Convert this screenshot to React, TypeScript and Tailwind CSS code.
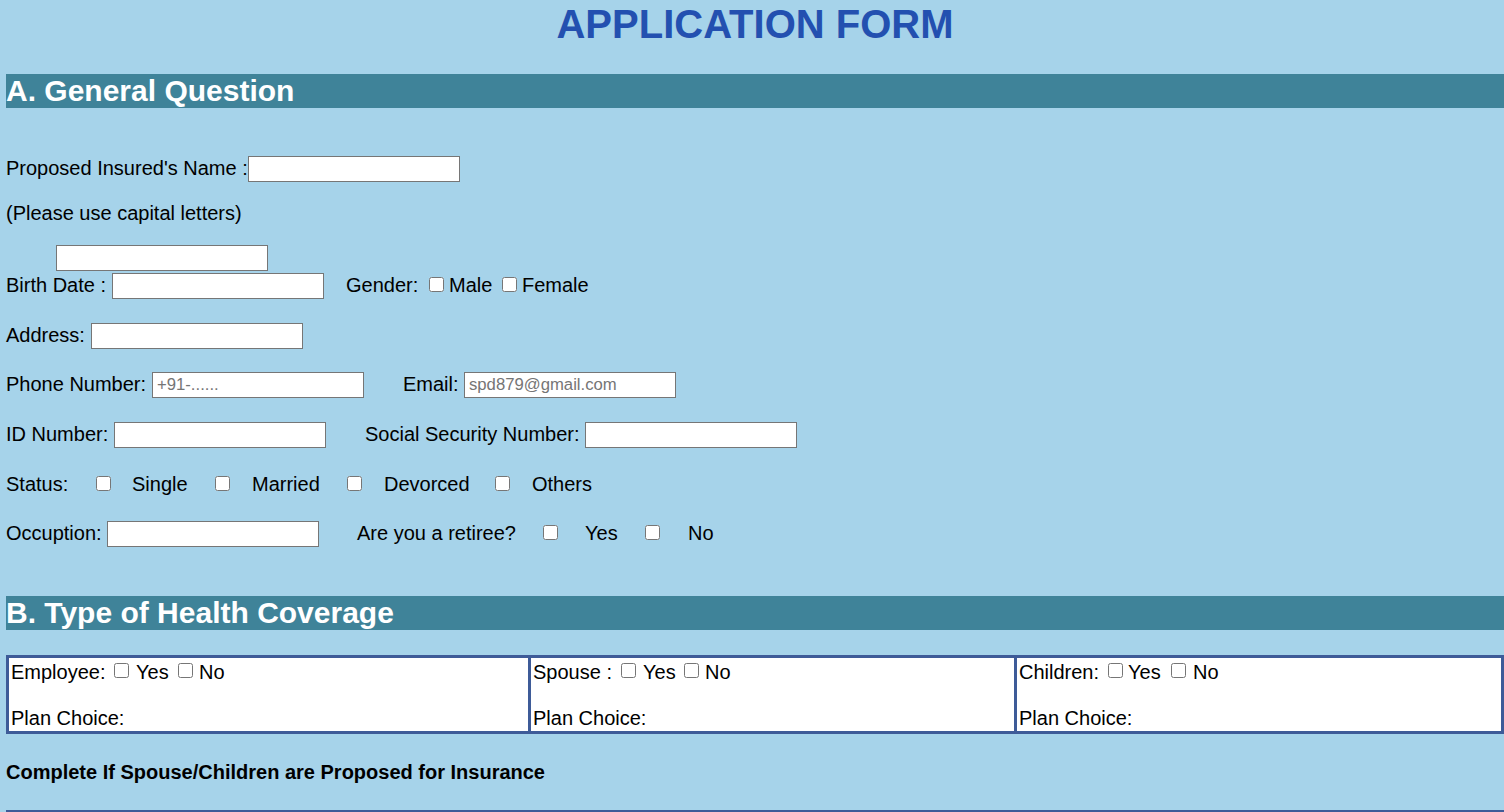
import React from 'react';

function Field({ placeholder, className = '' }: { placeholder?: string; className?: string }) {
  return (
    <input
      type="text"
      placeholder={placeholder}
      className={`w-[212px] h-[26px] shrink-0 border border-[#767676] bg-white px-[4px] text-[16.7px] text-black placeholder:text-[#757575] ${className}`}
    />
  );
}

function Box({ className = '' }: { className?: string }) {
  return <input type="checkbox" className={`w-[15px] h-[15px] -mx-[1px] shrink-0 mb-[4px] ${className}`} />;
}

function Label({ children, className = '' }: { children: React.ReactNode; className?: string }) {
  return <span className={`shrink-0 whitespace-nowrap mb-[3px] ${className}`}>{children}</span>;
}

function SectionBar({ title, className = '' }: { title: string; className?: string }) {
  return (
    <h2 className={`h-[34px] leading-[34px] bg-[#3f8399] text-white font-bold text-[30px] ${className}`}>
      {title}
    </h2>
  );
}

function CoverCell({
  label,
  labelW,
  yesGap,
  yesW,
  noGap,
  className = '',
}: {
  label: string;
  labelW: string;
  yesGap: string;
  yesW: string;
  noGap: string;
  className?: string;
}) {
  return (
    <div className={`px-[2px] pt-[2px] pb-[1px] ${className}`}>
      <div className="flex items-center h-[23px]">
        <span className={`shrink-0 whitespace-nowrap ${labelW}`}>{label}</span>
        <input type="checkbox" className="w-[15px] h-[15px] -mx-[1px] shrink-0 mb-[3px]" />
        <span className={`shrink-0 ${yesGap} ${yesW}`}>Yes</span>
        <input type="checkbox" className="w-[15px] h-[15px] -mx-[1px] shrink-0 mb-[3px]" />
        <span className={`shrink-0 ${noGap}`}>No</span>
      </div>
      <div className="mt-[24px] leading-[23px]">Plan Choice:</div>
    </div>
  );
}

export default function App() {
  return (
    <div className="min-h-screen bg-[#a6d3ea] pl-[6px] text-[20px] text-black font-['Liberation_Sans',Arial,sans-serif] overflow-hidden">
      <div className="w-[1498px]">
        <h1 className="pt-[1px] h-[47px] leading-[46px] text-center text-[40px] font-bold text-[#2350b0]">
          APPLICATION FORM
        </h1>

        <SectionBar title="A. General Question" className="mt-[27px]" />

        <div className="mt-[48px] flex items-center h-[26px]">
          <Label className="w-[242px]">Proposed Insured's Name :</Label>
          <Field />
        </div>

        <div className="mt-[20px] leading-[23px]">(Please use capital letters)</div>

        <div className="mt-[20px] flex items-center h-[26px]">
          <Field className="ml-[50px]" />
        </div>

        <div className="mt-[2px] flex items-center h-[26px]">
          <Label className="w-[106px]">Birth Date :</Label>
          <Field />
          <Label className="ml-[22px] w-[84px]">Gender:</Label>
          <Box />
          <Label className="ml-[6px] w-[54px]">Male</Label>
          <Box />
          <Label className="ml-[6px]">Female</Label>
        </div>

        <div className="mt-[24px] flex items-center h-[26px]">
          <Label className="w-[85px]">Address:</Label>
          <Field />
        </div>

        <div className="mt-[23px] flex items-center h-[26px]">
          <Label className="w-[146px]">Phone Number:</Label>
          <Field placeholder="+91-......" />
          <Label className="ml-[39px] w-[61px]">Email:</Label>
          <Field placeholder="spd879@gmail.com" />
        </div>

        <div className="mt-[24px] flex items-center h-[26px]">
          <Label className="w-[108px]">ID Number:</Label>
          <Field />
          <Label className="ml-[39px] w-[220px]">Social Security Number:</Label>
          <Field />
        </div>

        <div className="mt-[24px] flex items-center h-[26px]">
          <Label className="w-[91px]">Status:</Label>
          <Box />
          <Label className="ml-[22px] w-[84px]">Single</Label>
          <Box />
          <Label className="ml-[23px] w-[96px]">Married</Label>
          <Box />
          <Label className="ml-[23px] w-[112px]">Devorced</Label>
          <Box />
          <Label className="ml-[23px]">Others</Label>
        </div>

        <div className="mt-[23px] flex items-center h-[26px]">
          <Label className="w-[101px]">Occuption:</Label>
          <Field />
          <Label className="ml-[38px] w-[187px]">Are you a retiree?</Label>
          <Box />
          <Label className="ml-[28px] w-[61px]">Yes</Label>
          <Box />
          <Label className="ml-[29px]">No</Label>
        </div>

        <SectionBar title="B. Type of Health Coverage" className="mt-[49px]" />

        <div className="mt-[25px] flex border-[3px] border-[#3e5b98] bg-white">
          <CoverCell
            label="Employee:"
            labelW="w-[104px]"
            yesGap="ml-[8px]"
            yesW="w-[43px]"
            noGap="ml-[7px]"
            className="w-[522px] border-r-[3px] border-[#3e5b98]"
          />
          <CoverCell
            label="Spouse :"
            labelW="w-[89px]"
            yesGap="ml-[8px]"
            yesW="w-[42px]"
            noGap="ml-[7px]"
            className="w-[486px] border-r-[3px] border-[#3e5b98]"
          />
          <CoverCell
            label="Children:"
            labelW="w-[90px]"
            yesGap="ml-[6px]"
            yesW="w-[44px]"
            noGap="ml-[8px]"
            className="flex-1"
          />
        </div>

        <div className="mt-[27px] leading-[23px] font-bold">
          Complete If Spouse/Children are Proposed for Insurance
        </div>

        <div className="mt-[26px] h-[20px] border-[3px] border-b-0 border-[#3e5b98]" />
      </div>
    </div>
  );
}
